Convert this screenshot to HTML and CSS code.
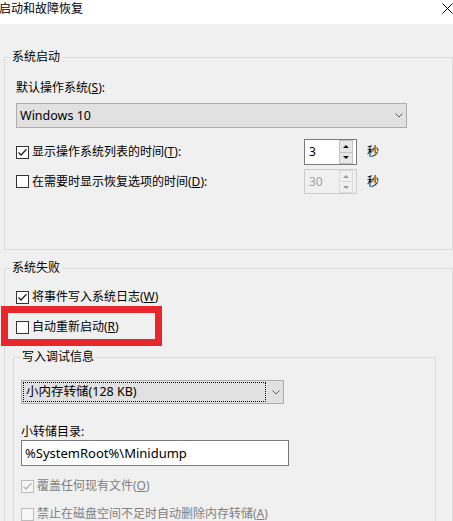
FILE: index.html
```html
<!DOCTYPE html>
<html lang="zh-CN">
<head>
<meta charset="utf-8">
<title>启动和故障恢复</title>
<link rel="stylesheet" href="styles.css">
</head>
<body>
<div class="window">
  <div class="titlebar">
    <span class="title">启动和故障恢复</span>
    <svg class="close" viewBox="0 0 11 11"><path d="M0.5 0.5 L10.5 10.5 M10.5 0.5 L0.5 10.5" stroke="#000" stroke-width="1" fill="none"/></svg>
  </div>

  <fieldset class="group g1">
    <legend>系统启动</legend>
    <div class="label lbl-os">默认操作系统(<u>S</u>):</div>
    <div class="combo combo-os">
      <span class="combo-text">Windows 10</span>
      <svg class="chev" viewBox="0 0 8 5"><path d="M0.5 0.5 L4 4 L7.5 0.5" stroke="#5a5a5a" fill="none"/></svg>
    </div>
    <div class="spin-row r1">
      <div class="check wide">
        <span class="box"><svg viewBox="0 0 11 11"><path d="M1.5 5.5 L4 8 L9.5 2.2" stroke="#222" stroke-width="1.3" fill="none"/></svg></span>
        <span>显示操作系统列表的时间(<u>T</u>):</span>
      </div>
      <div class="spinner focus">
        <span class="val">3</span>
        <div class="arrows"><span class="btn"><i class="up"></i></span><span class="btn"><i class="down"></i></span></div>
      </div>
      <span class="unit">秒</span>
    </div>
    <div class="spin-row r2">
      <div class="check wide">
        <span class="box"></span>
        <span>在需要时显示恢复选项的时间(<u>D</u>):</span>
      </div>
      <div class="spinner disabled">
        <span class="val">30</span>
        <div class="arrows"><span class="btn"><i class="up"></i></span><span class="btn"><i class="down"></i></span></div>
      </div>
      <span class="unit">秒</span>
    </div>
  </fieldset>

  <fieldset class="group g2">
    <legend>系统失败</legend>
    <div class="check row-w">
      <span class="box"><svg viewBox="0 0 11 11"><path d="M1.5 5.5 L4 8 L9.5 2.2" stroke="#222" stroke-width="1.3" fill="none"/></svg></span>
      <span>将事件写入系统日志(<u>W</u>)</span>
    </div>
    <div class="check row-r marked">
      <span class="box"></span>
      <span>自动重新启动(<u>R</u>)</span>
    </div>

    <fieldset class="group sub">
      <legend>写入调试信息</legend>
      <div class="combo combo-dump">
        <span class="focus-rect">小内存转储(128 KB)</span>
        <svg class="chev" viewBox="0 0 8 5"><path d="M0.5 0.5 L4 4 L7.5 0.5" stroke="#5a5a5a" fill="none"/></svg>
      </div>
      <div class="label lbl-dir">小转储目录:</div>
      <div class="textbox">%SystemRoot%\Minidump</div>
      <div class="check off row-o">
        <span class="box"><svg viewBox="0 0 11 11"><path d="M1.5 5.5 L4 8 L9.5 2.2" stroke="#b5b5b5" stroke-width="1.3" fill="none"/></svg></span>
        <span>覆盖任何现有文件(<u>O</u>)</span>
      </div>
      <div class="check off row-a">
        <span class="box"></span>
        <span>禁止在磁盘空间不足时自动删除内存转储(<u>A</u>)</span>
      </div>
    </fieldset>
  </fieldset>
</div>
</body>
</html>
```

FILE: styles.css
```css
html, body {
  margin: 0;
  padding: 0;
}
body {
  background: #f0f0f0;
  font-family: "Noto Sans", "Noto Sans CJK SC", sans-serif;
  font-size: 12px;
  line-height: 16px;
  color: #000;
  width: 453px;
  height: 521px;
  overflow: hidden;
}
.window {
  width: 453px;
}
.titlebar {
  height: 24px;
  background: #fff;
  display: flex;
  justify-content: space-between;
  align-items: flex-start;
}
.title {
  margin: 1px 0 0 -1px;
}
.close {
  width: 11px;
  height: 11px;
  margin-top: 3px;
}

.group {
  margin: 0;
  min-width: 0;
  box-sizing: border-box;
  border: 1px solid #dcdcdc;
  padding: 0 0 0 11px;
}
.group > legend {
  padding: 0 2px;
  margin-left: -6px;
  line-height: 16px;
}
.g1 {
  margin: 25px 0 0 4px;
  width: 449px;
  padding-bottom: 55px;
}
.g2 {
  margin: 10px 0 0 4px;
  width: 449px;
  padding-bottom: 0;
}
.sub {
  margin: 14px 0 0 -3px;
  width: 423px;
  padding-left: 7px;
  padding-bottom: 0;
}
.sub > legend {
  margin-left: -1px;
}

.lbl-os { margin-top: 15px; }
.combo {
  box-sizing: border-box;
  background: #e1e1e1;
  border: 1px solid #adadad;
  display: flex;
  align-items: center;
  justify-content: space-between;
}
.combo-os {
  margin-top: 7px;
  width: 391px;
  height: 25px;
  padding: 0 3px 0 3px;
}
.combo-text {
  font-size: 12.5px;
}
.chev {
  width: 8px;
  height: 5px;
}

.spin-row {
  display: flex;
  align-items: center;
}
.r1 { margin-top: 11px; }
.r2 { margin-top: 4px; }
.check {
  display: flex;
  align-items: center;
  gap: 3px;
}
.wide {
  width: 288px;
  flex: none;
}
.box {
  box-sizing: border-box;
  width: 13px;
  height: 13px;
  border: 1px solid #333;
  background: #fff;
  flex: none;
  display: flex;
}
.box svg {
  width: 11px;
  height: 11px;
}
.off {
  color: #808080;
}
.off .box {
  border-color: #bcbcbc;
  background: #f6f6f6;
}

.spinner {
  box-sizing: border-box;
  width: 53px;
  height: 26px;
  border: 1px solid #7a7a7a;
  background: #fff;
  display: flex;
  align-items: center;
  flex: none;
}
.spinner .val {
  padding-left: 4px;
  flex: 1;
}
.arrows {
  width: 14px;
  align-self: stretch;
  margin-right: 3px;
  display: flex;
  flex-direction: column;
}
.btn {
  flex: 1;
  box-sizing: border-box;
  background: #e6e6e6;
  border: 1px solid #c2c2c2;
  display: flex;
  align-items: center;
  justify-content: center;
}
.btn + .btn {
  border-top: none;
}
.up, .down {
  width: 0;
  height: 0;
  border-left: 3px solid transparent;
  border-right: 3px solid transparent;
}
.up { border-bottom: 3px solid #111; }
.down { border-top: 3px solid #111; }
.spinner.disabled {
  border-color: #cccccc;
  background: #f0f0f0;
  color: #a0a0a0;
  height: 25px;
}
.disabled .btn {
  background: #f0f0f0;
  border-color: #dadada;
}
.disabled .up { border-bottom-color: #9a9a9a; }
.disabled .down { border-top-color: #9a9a9a; }
.unit {
  margin-left: 10px;
}

.row-w { margin-top: 13px; }
.row-r {
  margin-top: 14px;
  position: relative;
}
.marked::after {
  content: "";
  position: absolute;
  left: -15px;
  top: -13px;
  width: 161px;
  height: 40px;
  box-sizing: border-box;
  border: 7px solid #e8272c;
}

.combo-dump {
  margin-top: 15px;
  width: 263px;
  height: 24px;
  padding: 0 3px 0 1px;
}
.focus-rect {
  box-sizing: border-box;
  width: 243px;
  height: 20px;
  border: 1px dotted #000;
  padding-left: 2px;
  line-height: 18px;
  font-size: 12.5px;
}
.lbl-dir { margin-top: 20px; }
.textbox {
  box-sizing: border-box;
  width: 268px;
  height: 26px;
  border: 1px solid #7a7a7a;
  background: #fff;
  padding-left: 3px;
  line-height: 24px;
  font-size: 13px;
}
.row-o { margin-top: 12px; }
.row-a { margin-top: 12px; }
```
